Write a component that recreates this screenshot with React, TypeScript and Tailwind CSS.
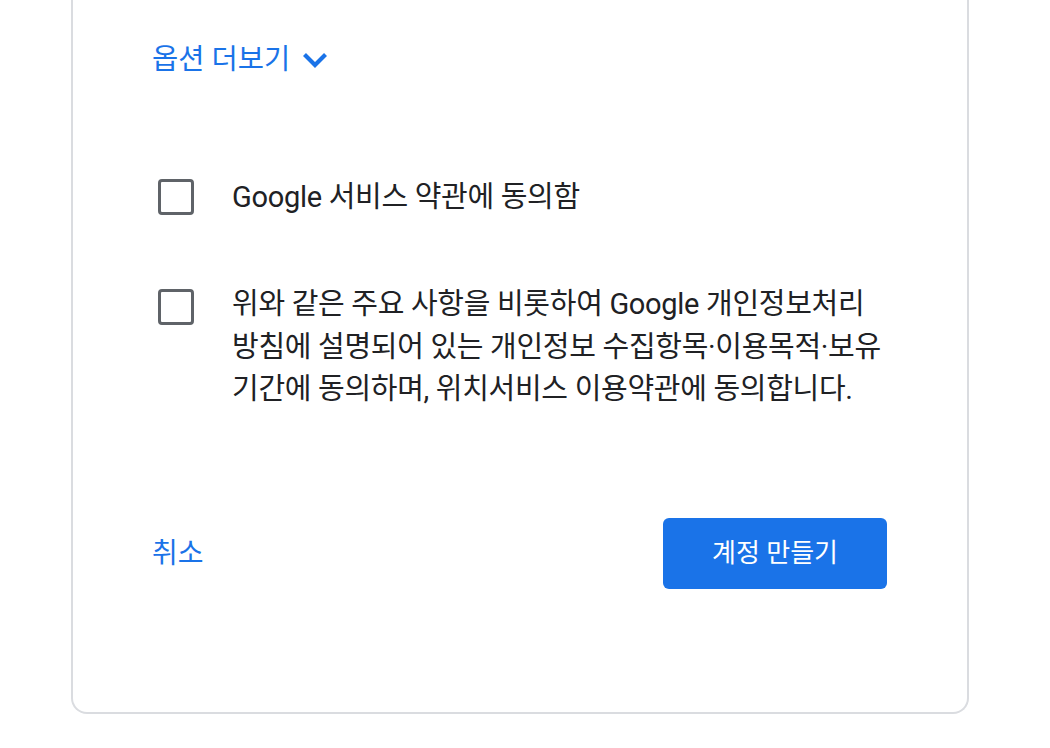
import React from 'react';

const font = { fontFamily: 'Roboto, "Noto Sans CJK KR", sans-serif' };

function Checkbox({ className = '' }: { className?: string }) {
  return (
    <div
      className={`w-[36px] h-[36px] shrink-0 rounded-[4px] border-[3px] border-[#5f6368] bg-white ${className}`}
    />
  );
}

export default function App() {
  return (
    <div className="w-[1050px] h-[748px] bg-white overflow-hidden" style={font}>
      <div className="ml-[71px] w-[898px] border-2 border-t-0 border-[#dadce0] rounded-b-[16px] pl-[79px] pr-[80px] pt-[40px] pb-[123px]">
        <button className="h-[40px] flex items-center gap-[12px] text-[#1a73e8] text-[28.5px] leading-[40px] cursor-pointer">
          <span>옵션 더보기</span>
          <svg width="26" height="18" viewBox="0 0 26 18" className="mt-[1px]">
            <path d="M2.5 2.5 L13 13 L23.5 2.5" fill="none" stroke="#1a73e8" strokeWidth="4.2" />
          </svg>
        </button>

        <label className="mt-[99px] flex items-center h-[36px]">
          <Checkbox className="ml-[6px]" />
          <span className="ml-[38px] text-[29px] text-[#202124] leading-[36px] tracking-[-0.3px]">
            Google 서비스 약관에 동의함
          </span>
        </label>

        <label className="mt-[68px] flex items-start">
          <Checkbox className="ml-[6px] mt-[6px]" />
          <span className="ml-[38px] text-[29px] text-[#202124] leading-[42.5px] tracking-[-0.3px]">
            <span className="block whitespace-nowrap">위와 같은 주요 사항을 비롯하여 Google 개인정보처리</span>
            <span className="block whitespace-nowrap">방침에 설명되어 있는 개인정보 수집항목·이용목적·보유</span>
            <span className="block whitespace-nowrap">기간에 동의하며, 위치서비스 이용약관에 동의합니다.</span>
          </span>
        </label>

        <div className="mt-[107px] flex items-center justify-between">
          <button className="text-[#1a73e8] text-[28px] h-[71px] leading-[71px] cursor-pointer">취소</button>
          <button className="w-[224px] h-[71px] rounded-[6px] bg-[#1a73e8] text-white text-[26px] cursor-pointer">
            계정 만들기
          </button>
        </div>
      </div>
    </div>
  );
}
